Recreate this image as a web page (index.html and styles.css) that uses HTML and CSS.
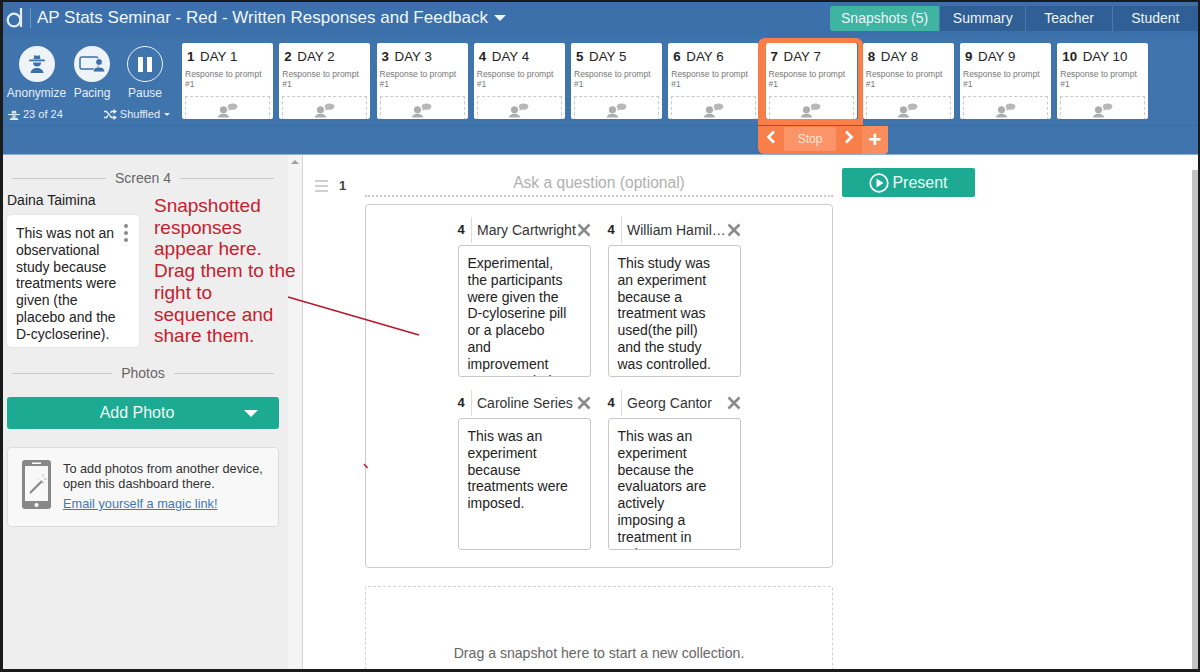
FILE: index.html
```html
<!DOCTYPE html>
<html lang="en">
<head>
<meta charset="utf-8">
<title>AP Stats Seminar</title>
<link rel="stylesheet" href="styles.css">
</head>
<body>
<svg class="defs" width="0" height="0" aria-hidden="true">
  <symbol id="people" viewBox="0 0 34 22">
    <circle cx="10" cy="10" r="5.500" fill="#adadad"/>
    <path d="M1 22c1-4 4-6 9-6s8 2 9 6z" fill="#adadad"/>
    <ellipse cx="24" cy="5" rx="7.500" ry="5" fill="#b8b8b8"/>
    <path d="M19 8l-3 3 6-1z" fill="#b8b8b8"/>
  </symbol>
  <symbol id="close" viewBox="0 0 14 14">
    <path d="M1.500 1.500l11 11M12.500 1.500l-11 11" stroke="#8a8a8a" stroke-width="2.600" fill="none"/>
  </symbol>
</svg>
<div class="frame">
  <header class="topbar">
    <svg class="logo" width="17" height="20" viewBox="0 0 17 20" role="img" aria-label="d"><circle cx="8" cy="12" r="6.300" fill="none" stroke="#e4edf5" stroke-width="2.200"/><path d="M15 0v19" stroke="#e4edf5" stroke-width="2.200"/></svg>
    <span class="logo-sep"></span>
    <span class="title">AP Stats Seminar - Red - Written Responses and Feedback</span>
    <span class="caret-title"></span>
    <nav class="tabs">
      <span class="tab tab-on">Snapshots (5)</span>
      <span class="tab">Summary</span>
      <span class="tab">Teacher</span>
      <span class="tab">Student</span>
    </nav>
  </header>

  <section class="toolbar">
    <div class="controls">
      <div class="tools">
        <div class="tool tool-a">
          <span class="circle">
            <svg width="22" height="22" viewBox="0 0 22 22"><path d="M7.500 6l1-4 2.500 1 2.500-1 1 4z" fill="#3c70aa"/><rect x="3" y="6.500" width="16" height="1.800" rx=".9" fill="#3c70aa"/><path d="M7 9.500h8c0 2.500-1.500 4-4 4s-4-1.500-4-4z" fill="#3c70aa"/><path d="M4.500 20c.5-3.500 3-5 6.500-5s6 1.500 6.500 5z" fill="#3c70aa"/></svg>
          </span>
          <span class="tool-label">Anonymize</span>
        </div>
        <div class="tool tool-b">
          <span class="circle">
            <svg width="26" height="20" viewBox="0 0 26 20"><rect x="1" y="3" width="18" height="12" rx="2" fill="none" stroke="#3c70aa" stroke-width="1.500"/><circle cx="20" cy="8" r="3.500" fill="#3c70aa" stroke="#fff"/><path d="M14 18c.5-4 3-5 6-5s5.500 1 6 5z" fill="#3c70aa" stroke="#fff" stroke-width=".8"/></svg>
          </span>
          <span class="tool-label">Pacing</span>
        </div>
        <div class="tool tool-c">
          <span class="circle circle-line">
            <svg width="14" height="15" viewBox="0 0 14 15"><rect width="5" height="15" fill="#fff"/><rect x="9" width="5" height="15" fill="#fff"/></svg>
          </span>
          <span class="tool-label">Pause</span>
        </div>
      </div>
      <div class="meta">
        <span class="meta-item">
          <svg width="12" height="10" viewBox="0 0 12 10"><path d="M3.500 3.500l.7-3 1.800.7 1.800-.7.700 3zM0 4h12v1H0z" fill="#dfe9f3"/><path d="M3 5.500h6l-3 2zM1.500 10c.5-2 2-2.500 4.500-2.500s4 .5 4.500 2.500z" fill="#dfe9f3"/></svg>
          23 of 24
        </span>
        <span class="meta-item">
          <svg width="13" height="11" viewBox="0 0 13 11"><path d="M0 2.500h2.500l5 6H10M0 8.500h2.500l1.500-2M6.500 4l1-1.500H10" fill="none" stroke="#eaf1f7" stroke-width="1.300"/><path d="M9.500 0l3.500 2.500L9.500 5zM9.500 6l3.500 2.500L9.500 11z" fill="#eaf1f7"/></svg>
          Shuffled
          <span class="caret-small"></span>
        </span>
      </div>
    </div>
    <div class="days">
      <article class="day"><h3><b>1</b> DAY 1</h3><p>Response to prompt #1</p><div class="drop"><svg class="ppl"><use href="#people"/></svg></div></article>
      <article class="day"><h3><b>2</b> DAY 2</h3><p>Response to prompt #1</p><div class="drop"><svg class="ppl"><use href="#people"/></svg></div></article>
      <article class="day"><h3><b>3</b> DAY 3</h3><p>Response to prompt #1</p><div class="drop"><svg class="ppl"><use href="#people"/></svg></div></article>
      <article class="day"><h3><b>4</b> DAY 4</h3><p>Response to prompt #1</p><div class="drop"><svg class="ppl"><use href="#people"/></svg></div></article>
      <article class="day"><h3><b>5</b> DAY 5</h3><p>Response to prompt #1</p><div class="drop"><svg class="ppl"><use href="#people"/></svg></div></article>
      <article class="day"><h3><b>6</b> DAY 6</h3><p>Response to prompt #1</p><div class="drop"><svg class="ppl"><use href="#people"/></svg></div></article>
      <article class="day"><h3><b>7</b> DAY 7</h3><p>Response to prompt #1</p><div class="drop"><svg class="ppl"><use href="#people"/></svg></div></article>
      <article class="day"><h3><b>8</b> DAY 8</h3><p>Response to prompt #1</p><div class="drop"><svg class="ppl"><use href="#people"/></svg></div></article>
      <article class="day"><h3><b>9</b> DAY 9</h3><p>Response to prompt #1</p><div class="drop"><svg class="ppl"><use href="#people"/></svg></div></article>
      <article class="day"><h3><b>10</b> DAY 10</h3><p>Response to prompt #1</p><div class="drop"><svg class="ppl"><use href="#people"/></svg></div></article>
    </div>
    <div class="cur-frame"></div>
    <div class="cur-ctrl">
      <div class="cur-nav">
        <svg class="chev" width="10" height="14" viewBox="0 0 10 14"><path d="M8 1.500L2.500 7 8 12.500" fill="none" stroke="#fff" stroke-width="2.800"/></svg>
        <span class="stop">Stop</span>
        <svg class="chev" width="10" height="14" viewBox="0 0 10 14"><path d="M2 1.500L7.500 7 2 12.500" fill="none" stroke="#fff" stroke-width="2.800"/></svg>
      </div>
      <span class="plus">+</span>
    </div>
  </section>

  <div class="body">
    <aside class="side">
      <div class="divider"><span>Screen 4</span></div>
      <div class="student">Daina Taimina</div>
      <div class="side-card">
        <p>This was not an observational study because treatments were given (the placebo and the D-cycloserine).</p>
        <span class="kebab"><i></i><i></i><i></i></span>
      </div>
      <div class="divider divider-photos"><span>Photos</span></div>
      <div class="add-photo"><span>Add Photo</span><span class="caret-add"></span></div>
      <div class="magic">
        <svg class="phone" width="29" height="49" viewBox="0 0 29 49"><rect width="29" height="49" rx="3" fill="#888"/><rect x="3" y="6" width="23" height="35" fill="#f8f8f8"/><rect x="10" y="2.500" width="9" height="1.500" fill="#fff"/><circle cx="14.500" cy="45" r="2" fill="#fff"/><path d="M8 33l12-12" stroke="#888" stroke-width="2.200"/><path d="M21 14v3M21 21v3M25 19h-3M17 19h-1" stroke="#bbb" stroke-width="1"/></svg>
        <div class="magic-text">
          <div>To add photos from another device, open this dashboard there.</div>
          <a class="magic-link" href="#">Email yourself a magic link!</a>
        </div>
      </div>
    </aside>
    <div class="track"><span class="track-up"></span></div>
    <main class="main">
      <div class="gutter">
        <span class="grip"><i></i><i></i><i></i></span>
        <span class="num">1</span>
      </div>
      <div class="center">
        <div class="question">Ask a question (optional)</div>
        <div class="collection">
          <div class="snaps">
            <div class="snap">
              <div class="snap-head"><b>4</b><span class="name">Mary Cartwright</span><svg class="x"><use href="#close"/></svg></div>
              <div class="snap-body">Experimental, the participants were given the D-cyloserine pill or a placebo and improvement was recorded.</div>
            </div>
            <div class="snap">
              <div class="snap-head"><b>4</b><span class="name">William Hamilton</span><svg class="x"><use href="#close"/></svg></div>
              <div class="snap-body">This study was an experiment because a treatment was used(the pill) and the study was controlled.</div>
            </div>
            <div class="snap">
              <div class="snap-head"><b>4</b><span class="name">Caroline Series</span><svg class="x"><use href="#close"/></svg></div>
              <div class="snap-body">This was an experiment because treatments were imposed.</div>
            </div>
            <div class="snap">
              <div class="snap-head"><b>4</b><span class="name">Georg Cantor</span><svg class="x"><use href="#close"/></svg></div>
              <div class="snap-body">This was an experiment because the evaluators are actively imposing a treatment in order to observe.</div>
            </div>
          </div>
        </div>
        <div class="dropzone">Drag a snapshot here to start a new collection.</div>
      </div>
      <div class="present">
        <svg width="20" height="20" viewBox="0 0 20 20"><circle cx="10" cy="10" r="8.800" fill="none" stroke="#fff" stroke-width="1.700"/><path d="M7.500 5.500l7 4.500-7 4.500z" fill="#fff"/></svg>
        Present
      </div>
    </main>
    <div class="vscroll"><span></span></div>
  </div>

  <div class="note">Snapshotted responses appear here. Drag them to the right to sequence and share them.</div>
  <svg class="ink" width="1200" height="672" viewBox="0 0 1200 672" aria-hidden="true">
    <path d="M288 297L419 335" stroke="#b5172b" stroke-width="1.500" fill="none"/>
    <path d="M364 464l3.500 4" stroke="#b5172b" stroke-width="1.500" fill="none"/>
  </svg>
</div>
</body>
</html>
```
FILE: styles.css
```css
* { box-sizing: border-box; }
html, body { margin: 0; padding: 0; }
body {
  width: 1200px;
  height: 672px;
  overflow: hidden;
  font-family: "Liberation Sans", Arial, sans-serif;
  color: #222;
  background: #000;
}
.defs { position: absolute; }
.frame {
  position: relative;
  width: 1200px;
  height: 672px;
  display: flex;
  flex-direction: column;
  overflow: hidden;
  border-style: solid;
  border-color: #1a1a1a;
  border-width: 2px 2px 3px 3px;
  background: #fff;
}

/* title bar */
.topbar {
  flex: 0 0 35px;
  display: flex;
  align-items: center;
  background: #3c70aa;
  color: #f2f6fa;
}
.logo { flex: none; margin: -3px 0 0 3px; }
.logo-sep { width: 1px; height: 20px; margin: -3px 6px 0 7px; background: #6f97c2; }
.title { margin-top: -3px; font-size: 17px; white-space: nowrap; }
.caret-title {
  width: 0;
  height: 0;
  margin: -3px 0 0 6px;
  border-style: solid;
  border-width: 6px 6.500px 0;
  border-color: #eef3f8 transparent transparent;
}
.tabs { margin-left: auto; display: flex; align-self: flex-start; margin-top: 4px; }
.tab {
  width: 86.300px;
  height: 25px;
  border-left: 1px solid #4a78a8;
  background: #2f5f94;
  font-size: 14px;
  line-height: 25px;
  text-align: center;
  color: #eef3f8;
}
.tab-on {
  width: 109px;
  border-left: 0;
  border-radius: 3px 0 0 3px;
  background: #3fb4a2;
}

/* toolbar */
.toolbar {
  position: relative;
  flex: 0 0 118px;
  display: flex;
  padding-top: 6px;
  background: #4074ac;
  border-bottom: 1px solid #8db0d3;
}
.toolbar::after {
  content: "";
  position: absolute;
  left: 0;
  right: 0;
  top: 88px;
  height: 1px;
  background: #3a6ea6;
}
.controls { width: 179px; padding-left: 2px; color: #e7eef5; }
.tools { display: flex; }
.tool { display: flex; flex-direction: column; align-items: center; }
.tool-a { width: 63px; }
.tool-b { width: 48px; }
.tool-c { width: 58px; }
.circle {
  width: 36px;
  height: 36px;
  margin-top: 3px;
  display: flex;
  align-items: center;
  justify-content: center;
  border-radius: 50%;
  background: #eef3f8;
}
.circle-line { background: transparent; border: 1px solid #eef3f8; }
.tool-label { margin-top: 4px; font-size: 12px; line-height: 14px; white-space: nowrap; }
.meta {
  display: flex;
  justify-content: space-between;
  margin-top: 8px;
  padding: 0 12px 0 3px;
  font-size: 11px;
  line-height: 13px;
}
.meta-item { display: flex; align-items: center; gap: 3px; }
.caret-small {
  width: 0;
  height: 0;
  margin-left: 1px;
  border-style: solid;
  border-width: 3px 3px 0;
  border-color: #e7eef5 transparent transparent;
}
.days { display: flex; gap: 6.250px; align-items: flex-start; }
.day {
  width: 91px;
  height: 76px;
  padding: 6px 3px 0;
  overflow: hidden;
  border-radius: 2px;
  background: #fff;
}
.day h3 {
  margin: 0 0 0 2px;
  font-size: 13.300px;
  font-weight: 400;
  line-height: 15px;
  white-space: nowrap;
  color: #222;
}
.day h3 b { margin-right: 2px; }
.day p {
  margin: 5px 0 0;
  height: 20px;
  font-size: 8.500px;
  line-height: 10px;
  color: #777;
}
.drop {
  height: 30px;
  margin-top: 7px;
  display: flex;
  justify-content: center;
  padding-top: 6px;
  border: 1px dashed #c9c9c9;
}
.ppl { width: 22px; height: 15px; }

/* current-day marker */
.cur-frame {
  position: absolute;
  left: 755px;
  top: 1px;
  width: 105px;
  height: 88px;
  border-style: solid;
  border-color: #f87f4a;
  border-width: 5px 5px 7px 8px;
  border-radius: 7px 7px 0 0;
}
.cur-ctrl {
  position: absolute;
  left: 755px;
  top: 88px;
  display: flex;
}
.cur-nav {
  width: 104px;
  height: 29px;
  display: flex;
  align-items: center;
  justify-content: space-between;
  padding: 0 8px;
  background: #f87f4a;
  border-radius: 0 0 0 6px;
}
.chev { margin-bottom: 6px; }
.stop {
  width: 52px;
  height: 24px;
  margin-bottom: 2px;
  border-radius: 3px;
  background: #fb9569;
  color: #fde6da;
  font-size: 12px;
  line-height: 24px;
  text-align: center;
}
.plus {
  width: 26px;
  height: 29px;
  background: #fb8d5c;
  color: #fff;
  border-radius: 0 0 4px 0;
  font-size: 22px;
  font-weight: 700;
  line-height: 30px;
  text-align: center;
}

/* body */
.body { flex: 1; min-height: 0; display: flex; }
.side {
  width: 285px;
  flex: none;
  padding: 15px 9px 0 4px;
  background: #eeeeee;
}
.divider {
  display: flex;
  align-items: center;
  gap: 9px;
  padding: 0 5px;
  font-size: 14px;
  line-height: 16px;
  color: #666;
}
.divider::before, .divider::after { content: ""; flex: 1; height: 1px; background: #c9c9c9; }
.student { margin-top: 6px; font-size: 14px; line-height: 16px; color: #222; }
.side-card {
  position: relative;
  width: 132px;
  height: 132px;
  margin-top: 7px;
  padding: 10px 9px 0;
  border-radius: 4px;
  background: #fff;
  box-shadow: 0 0 1px #bbb;
}
.side-card p { margin: 0; font-size: 14px; line-height: 16.800px; color: #222; }
.kebab {
  position: absolute;
  right: 11px;
  top: 9px;
  display: flex;
  flex-direction: column;
  gap: 3px;
}
.kebab i { width: 4px; height: 4px; border-radius: 50%; background: #8a8a8a; }
.divider-photos { margin-top: 18px; }
.add-photo {
  position: relative;
  height: 32px;
  margin-top: 16px;
  padding-right: 12px;
  border-radius: 3px;
  background: #1cab92;
  color: #f2f8f6;
  font-size: 16px;
  line-height: 32px;
  text-align: center;
}
.caret-add {
  position: absolute;
  right: 21px;
  top: 13px;
  width: 0;
  height: 0;
  border-style: solid;
  border-width: 7px 7px 0;
  border-color: #fff transparent transparent;
}
.magic {
  display: flex;
  gap: 12px;
  height: 80px;
  margin-top: 18px;
  padding: 12px 0 0 14px;
  border: 1px solid #dcdcdc;
  border-radius: 4px;
  background: #f8f8f8;
  font-size: 12.750px;
  line-height: 15px;
  color: #333;
}
.phone { flex: none; }
.magic-text { width: 205px; padding-top: 1px; }
.magic-link { display: block; margin-top: 5px; color: #3f79b5; text-decoration: underline; }
.track {
  width: 15px;
  flex: none;
  border-right: 1px solid #d4d4d4;
  background: #f4f4f4;
}
.track-up {
  display: block;
  width: 0;
  height: 0;
  margin: 5px 0 0 3px;
  border-style: solid;
  border-width: 0 4px 4px;
  border-color: transparent transparent #a0a0a0;
}
.main { flex: 1; min-width: 0; display: flex; align-items: flex-start; }
.gutter { width: 62px; flex: none; display: flex; align-items: center; gap: 11px; padding: 24px 0 0 12px; }
.grip { display: flex; flex-direction: column; gap: 3px; }
.grip i { width: 13px; height: 2px; background: #cfcfcf; }
.num { font-size: 13px; font-weight: 700; color: #444; line-height: 14px; }
.center { width: 468px; flex: none; }
.question {
  height: 23px;
  margin-top: 19px;
  border-bottom: 2px dotted #c9c9c9;
  font-size: 15.600px;
  line-height: 18px;
  text-align: center;
  color: #b0b0b0;
}
.collection {
  height: 364px;
  margin-top: 7px;
  padding-top: 12px;
  border: 1px solid #cdcdcd;
  border-radius: 4px;
}
.snaps {
  display: grid;
  grid-template-columns: 133px 133px;
  justify-content: center;
  column-gap: 17px;
  row-gap: 13px;
}
.snap-head {
  height: 26px;
  margin-bottom: 2px;
  display: flex;
  align-items: center;
  font-size: 14px;
}
.snap-head b {
  width: 14px;
  height: 26px;
  margin-right: 5.500px;
  border-right: 1px solid #dcdcdc;
  font-size: 13px;
  line-height: 26px;
}
.name {
  flex: 1;
  min-width: 0;
  overflow: hidden;
  white-space: nowrap;
  text-overflow: ellipsis;
  color: #333;
}
.x { width: 14px; height: 14px; flex: none; }
.snap-body {
  height: 132px;
  padding: 9px 20px 0 9px;
  overflow: hidden;
  border: 1px solid #c8c8c8;
  border-radius: 3px;
  font-size: 14px;
  line-height: 16.800px;
  color: #222;
}
.dropzone {
  height: 100px;
  margin-top: 18px;
  padding-top: 58px;
  border: 1px dashed #d2d2d2;
  border-radius: 3px;
  font-size: 14.100px;
  line-height: 16px;
  text-align: center;
  color: #666;
}
.present {
  width: 133px;
  height: 29px;
  margin: 13px 0 0 9px;
  flex: none;
  display: flex;
  align-items: center;
  justify-content: center;
  gap: 3px;
  border-radius: 2px;
  background: #1cab92;
  color: #eff8f5;
  font-size: 16px;
}
.vscroll { width: 6px; flex: none; padding-top: 15px; background: #fafafa; }
.vscroll span { display: block; height: 100%; background: #c2c2c2; }

/* annotation */
.note {
  position: absolute;
  left: 151px;
  top: 193px;
  width: 143px;
  font-size: 19px;
  line-height: 21.700px;
  color: #c5202e;
}
.ink { position: absolute; left: -3px; top: -2px; pointer-events: none; }
```
